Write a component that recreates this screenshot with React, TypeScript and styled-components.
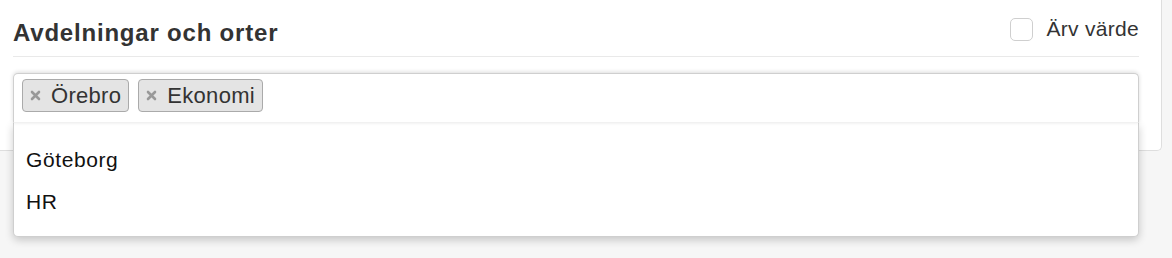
import React from "react";
import styled, { createGlobalStyle } from "styled-components";

const Global = createGlobalStyle`
  html, body { margin: 0; padding: 0; }
  body {
    background: #f6f6f6;
    font-family: "Liberation Sans", Arial, Helvetica, sans-serif;
    color: #333;
  }
  #root { min-height: 258px; }
`;

const Panel = styled.section`
  width: 1162px;
  box-sizing: border-box;
  background: #fff;
  border-right: 1px solid #dedede;
  border-bottom: 1px solid #dedede;
  border-radius: 0 0 5px 0;
  padding: 10px 22px 27px 13px;
`;

const Header = styled.div`
  display: flex;
  align-items: center;
  justify-content: space-between;
  height: 46px;
  border-bottom: 1px solid #e9e9e9;
`;

const Title = styled.h2`
  margin: 0;
  font-size: 24px;
  font-weight: 700;
  letter-spacing: 0.8px;
  color: #333;
`;

const Inherit = styled.label`
  display: flex;
  align-items: center;
  gap: 13px;
  font-size: 21px;
  letter-spacing: 0.3px;
  color: #333;
  margin-top: -8px;
`;

const Box = styled.span`
  width: 21px;
  height: 21px;
  border: 1px solid #cfcfcf;
  border-radius: 5px;
  background: #fff;
`;

const Select = styled.div`
  position: relative;
  margin-top: 16px;
`;

const Selection = styled.div`
  display: flex;
  gap: 9px;
  height: 50px;
  box-sizing: border-box;
  padding: 5px 8px;
  border: 1px solid #cfcfcf;
  border-bottom-color: #f1f1f1;
  border-radius: 5px 5px 0 0;
  background: #fff;
  box-shadow: 0 -1px 4px rgba(0, 0, 0, 0.14);
  position: relative;
  z-index: 2;
`;

const Tag = styled.span`
  display: flex;
  align-items: center;
  gap: 10px;
  height: 33px;
  box-sizing: border-box;
  padding: 0 7px 0 7px;
  background: #e4e4e4;
  border: 1px solid #aaa;
  border-radius: 4px;
  font-size: 22px;
  letter-spacing: 0.3px;
  color: #333;
`;

const Remove = styled.svg`
  width: 11px;
  height: 11px;
  flex: none;
`;

const Dropdown = styled.ul`
  position: absolute;
  top: 50px;
  left: 0;
  right: 0;
  margin: 0;
  list-style: none;
  padding: 16px 0 13px;
  background: #fff;
  border: 1px solid #cfcfcf;
  border-top: none;
  border-radius: 0 0 5px 5px;
  box-shadow: 0 3px 8px rgba(0, 0, 0, 0.2);
  z-index: 1;
`;

const Option = styled.li`
  height: 42px;
  display: flex;
  align-items: center;
  padding: 0 12px;
  font-size: 21px;
  letter-spacing: 0.6px;
  color: #111;
`;

const X = () => (
  <Remove viewBox="0 0 11 11">
    <path d="M2 2 L9 9 M9 2 L2 9" stroke="#999" strokeWidth="2.6" strokeLinecap="round" />
  </Remove>
);

export default function App() {
  return (
    <>
      <Global />
      <Panel>
        <Header>
          <Title>Avdelningar och orter</Title>
          <Inherit>
            <Box />
            Ärv värde
          </Inherit>
        </Header>
        <Select>
          <Selection>
            <Tag>
              <X />Örebro
            </Tag>
            <Tag>
              <X />Ekonomi
            </Tag>
          </Selection>
          <Dropdown>
            <Option>Göteborg</Option>
            <Option>HR</Option>
          </Dropdown>
        </Select>
      </Panel>
    </>
  );
}
